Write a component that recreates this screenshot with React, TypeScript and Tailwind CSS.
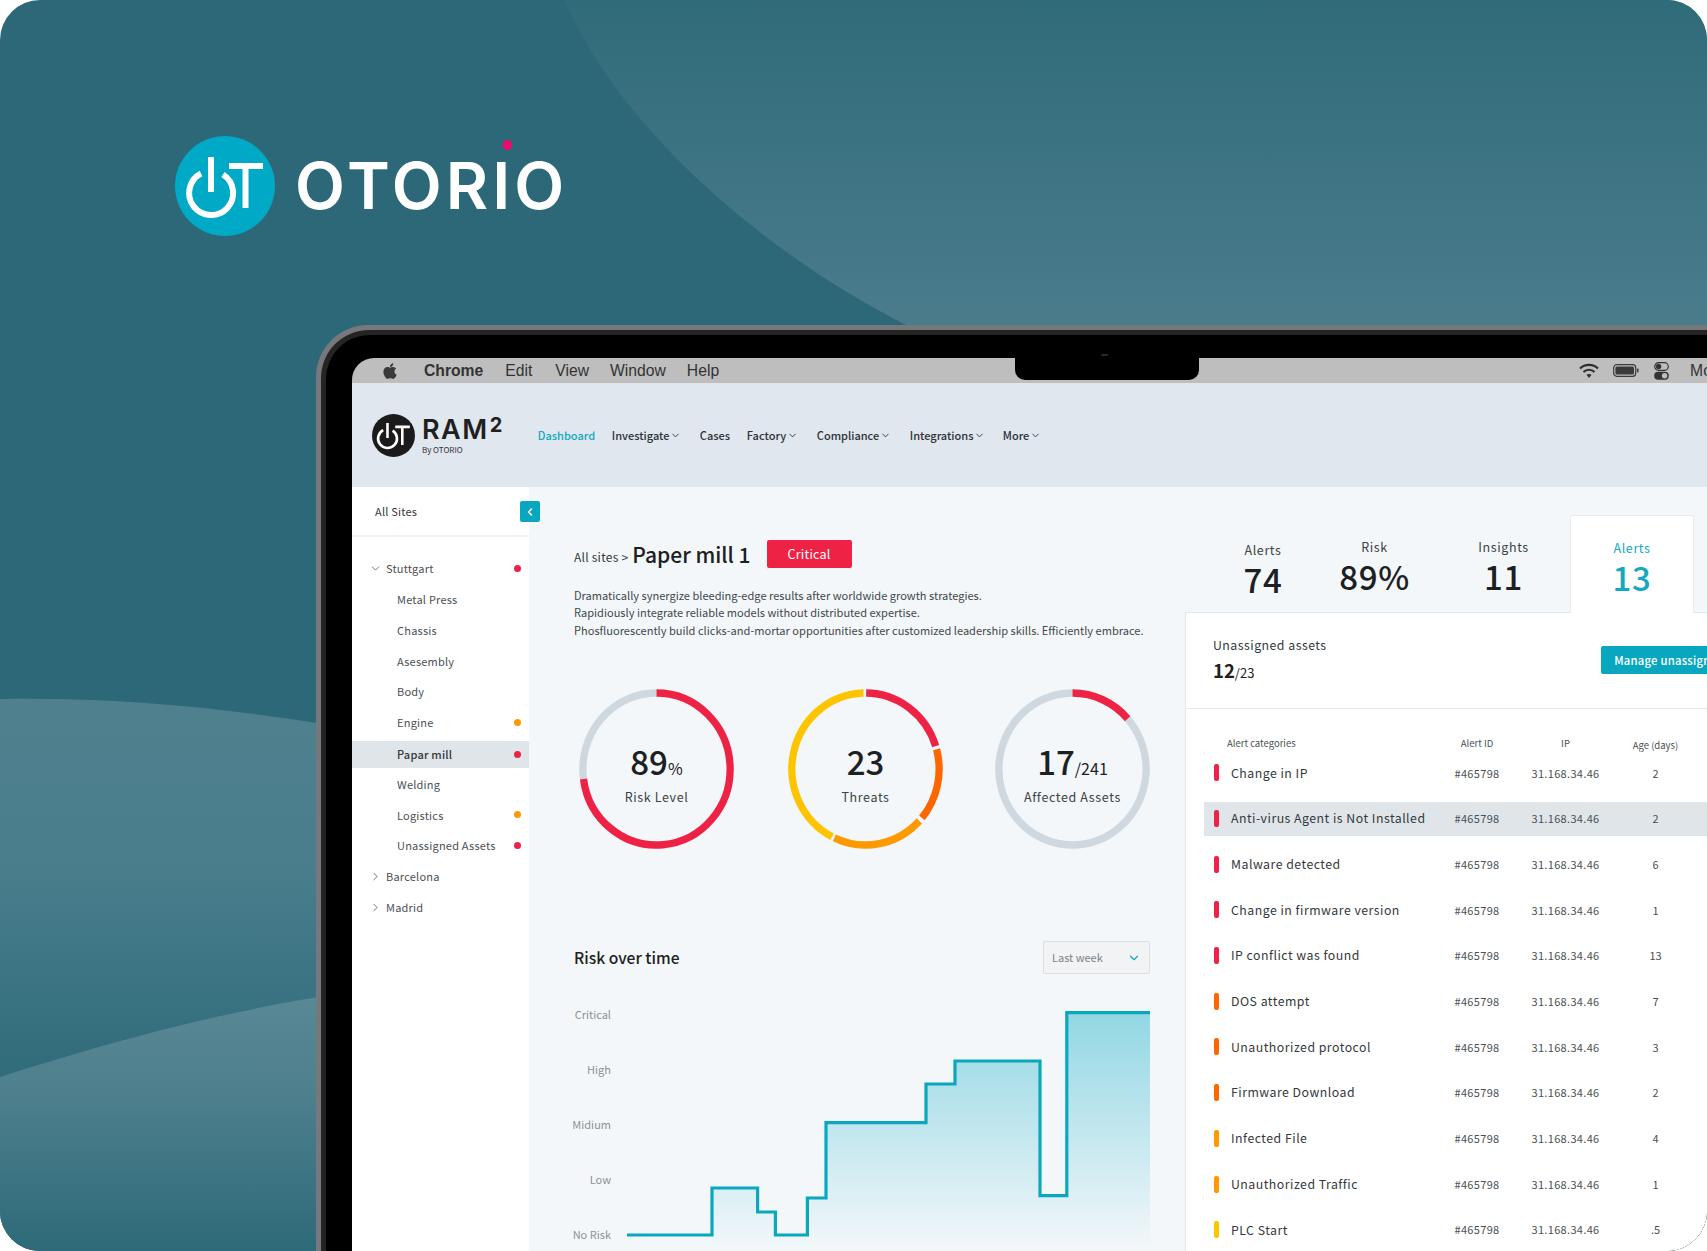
import React from "react";
import { ChevronDown, ChevronRight, ChevronLeft } from "lucide-react";
import { FaApple } from "react-icons/fa";

const sans = "font-['Noto_Sans_CJK_JP','Noto_Sans',sans-serif]";

function Mark({ size, bg, fg }: { size: number; bg: string; fg: string }) {
  return (
    <svg width={size} height={size} viewBox="0 0 100 100">
      <circle cx="50" cy="50" r="50" fill={bg} />
      <g fill="none" stroke={fg} strokeWidth="6">
        <path d="M26 37.5 A 22 22 0 1 0 48 38.5" />
        <path d="M36 21 V56" />
        <path d="M54 30 H88 M70.5 30 V72" />
      </g>
    </svg>
  );
}

function Ring({ segs, children }: { segs: [number, number, string][]; children: React.ReactNode }) {
  const r = 76;
  const pt = (a: number) => {
    const t = (a * Math.PI) / 180;
    return `${80 + r * Math.sin(t)} ${80 - r * Math.cos(t)}`;
  };
  return (
    <div className="relative w-[155px] h-[160px] shrink-0">
      <svg width="155" height="160" viewBox="0 0 160 160" preserveAspectRatio="none" className="block">
        {segs.map(([a, b, c], i) => (
          <path key={i} d={`M${pt(a)} A${r} ${r} 0 ${b - a > 180 ? 1 : 0} 1 ${pt(b)}`} fill="none" stroke={c} strokeWidth="7.5" />
        ))}
      </svg>
      <div className="absolute inset-0 flex flex-col items-center pt-[52px]">{children}</div>
    </div>
  );
}

function RingLabel({ children }: { children: React.ReactNode }) {
  return <div className="h-[20px] mt-[6px] text-[12.5px] leading-[20px] text-[#3c4246] tracking-[0.05em]">{children}</div>;
}

const sites: [string, string | null, number][] = [
  ["Stuttgart", "#ee2244", 0],
  ["Metal Press", null, 1],
  ["Chassis", null, 1],
  ["Asesembly", null, 1],
  ["Body", null, 1],
  ["Engine", "#ff9900", 1],
  ["Papar mill", "#ee2244", 1],
  ["Welding", null, 1],
  ["Logistics", "#ff9900", 1],
  ["Unassigned Assets", "#ee2244", 1],
  ["Barcelona", null, 0],
  ["Madrid", null, 0],
];

const alerts: [string, string, string][] = [
  ["Change in IP", "#ee2244", "2"],
  ["Anti-virus Agent is Not Installed", "#ee2244", "2"],
  ["Malware detected", "#ee2244", "6"],
  ["Change in firmware version", "#ee2244", "1"],
  ["IP conflict was found", "#ee2244", "13"],
  ["DOS attempt", "#ff6600", "7"],
  ["Unauthorized protocol", "#ff6600", "3"],
  ["Firmware Download", "#ff6600", "2"],
  ["Infected File", "#ff9900", "4"],
  ["Unauthorized Traffic", "#ff9900", "1"],
  ["PLC Start", "#ffc400", ".5"],
];

const nav: [string, boolean, string][] = [
  ["Investigate", true, "w-[88px]"],
  ["Cases", false, "w-[47px]"],
  ["Factory", true, "w-[70px]"],
  ["Compliance", true, "w-[93px]"],
  ["Integrations", true, "w-[93px]"],
  ["More", true, "w-[40px]"],
];

function Tab({ label, value, active, className }: { label: string; value: string; active?: boolean; className: string }) {
  return (
    <div className={`flex flex-col items-center ${className}`}>
      <div className={`h-[20px] text-[12.5px] leading-[20px] tracking-[0.05em] ${active ? "text-[#12a9c1]" : "text-[#3c4246]"}`}>{label}</div>
      <div className={`h-[38px] text-[33px] leading-[38px] font-medium tracking-[0.02em] ${active ? "text-[#12a9c1]" : "text-[#1c2023]"}`}>{value}</div>
    </div>
  );
}

export default function App() {
  return (
    <div className="relative w-[1707px] h-[1251px] overflow-hidden rounded-[40px] bg-[#2c6877]">
      <svg width="1707" height="1251" viewBox="0 0 1707 1251" className="absolute inset-0">
        <defs>
          <linearGradient id="tr" x1="0" y1="0" x2="0" y2="325" gradientUnits="userSpaceOnUse">
            <stop offset="0" stopColor="#306b7a" />
            <stop offset="1" stopColor="#4a7c8c" />
          </linearGradient>
          <linearGradient id="bl1" x1="0" y1="700" x2="0" y2="1060" gradientUnits="userSpaceOnUse">
            <stop offset="0" stopColor="#4f808e" />
            <stop offset="0.45" stopColor="#4a7e8d" />
            <stop offset="1" stopColor="#326d7c" />
          </linearGradient>
          <linearGradient id="bl2" x1="0" y1="1000" x2="0" y2="1251" gradientUnits="userSpaceOnUse">
            <stop offset="0" stopColor="#588795" />
            <stop offset="0.35" stopColor="#4f808e" />
            <stop offset="1" stopColor="#2e6a79" />
          </linearGradient>
        </defs>
        <path d="M565 0 C 610 110, 740 240, 906 325 L1707 325 L1707 0 Z" fill="url(#tr)" />
        <path d="M0 699 C 110 697, 220 707, 330 725 L330 1251 L0 1251 Z" fill="url(#bl1)" />
        <path d="M0 1077 C 100 1045, 210 1014, 330 995 L330 1251 L0 1251 Z" fill="url(#bl2)" />
      </svg>

      {/* Brand */}
      <div className="relative flex items-center pl-[175px] pt-[135px] h-[236px]">
        <Mark size={100} bg="#00a9c6" fg="#ffffff" />
        <div className="relative ml-[20px] font-['Inter',sans-serif] font-semibold text-white text-[65px] leading-[65px] tracking-[4px]">
          OTORIO
          <span className="absolute left-[208px] top-[-13px] w-[9px] h-[10px] rounded-full bg-[#ee0a6c]" />
        </div>
      </div>

      {/* Laptop */}
      <div className="relative ml-[316px] mt-[89px] w-[1500px] h-[1000px] rounded-tl-[52px] bg-[#76787b] pl-[5px] pt-[5px]">
        <div className="h-full rounded-tl-[48px] bg-[#242424] pl-[5px] pt-[5px]">
          <div className="h-full rounded-tl-[44px] bg-black pl-[26px] pt-[23px]">
            <span className="absolute left-[785px] top-[29px] w-[7px] h-[2px] rounded-full bg-[#2a2a2a]" />
            <div className="h-full w-full overflow-hidden rounded-tl-[22px] flex flex-col">
              {/* Menu bar */}
              <div className="relative h-[25px] shrink-0 bg-[#bebebe] flex items-center font-['Liberation_Sans',sans-serif] text-[15.7px] text-[#333]">
                <FaApple className="ml-[29px] text-[#3a3a3a]" size={18} />
                <span className="ml-[25px] font-bold">Chrome</span>
                <span className="ml-[22px]">Edit</span>
                <span className="ml-[23px]">View</span>
                <span className="ml-[21px]">Window</span>
                <span className="ml-[21px]">Help</span>
                <div className="ml-[296px] mb-[3px] w-[184px] h-[22px] self-start rounded-b-[10px] bg-black" />
                <svg width="20" height="16" viewBox="0 0 20 16" className="ml-[380px]">
                  <g fill="none" stroke="#2e2e2e" strokeWidth="2.2">
                    <path d="M1 5.5 C 6 0.7, 14 0.7, 19 5.5" />
                    <path d="M4.5 9 C 7.5 6, 12.5 6, 15.5 9" />
                  </g>
                  <path d="M7.5 11.8 C 9 10.6, 11 10.6, 12.5 11.8 L10 15 Z" fill="#2e2e2e" />
                </svg>
                <svg width="26" height="13" viewBox="0 0 26 13" className="ml-[14px]">
                  <rect x="0.7" y="0.7" width="22" height="11.6" rx="3" fill="none" stroke="#3a3a3a" strokeWidth="1.2" />
                  <rect x="2.4" y="2.4" width="18.6" height="8.2" rx="1.5" fill="#3a3a3a" />
                  <rect x="24" y="4.5" width="1.5" height="4" rx="0.7" fill="#3a3a3a" />
                </svg>
                <svg width="15" height="18" viewBox="0 0 15 18" className="ml-[15px]">
                  <rect x="0.7" y="0.7" width="13.6" height="7.6" rx="3.8" fill="none" stroke="#333" strokeWidth="1.2" />
                  <circle cx="4.6" cy="4.5" r="2.7" fill="#333" />
                  <rect x="0.2" y="9.8" width="14.6" height="8" rx="4" fill="#333" />
                  <circle cx="10.6" cy="13.8" r="2.7" fill="#bebebe" />
                </svg>
                <span className="ml-[21px]">Mon</span>
              </div>

              {/* App nav */}
              <div className={`h-[104px] shrink-0 bg-[#e0e7ef] flex items-center ${sans}`}>
                <div className="ml-[20px] flex items-center">
                  <Mark size={43} bg="#1b1b1b" fg="#ffffff" />
                  <div className="ml-[7px] flex flex-col">
                    <div className="font-['Inter',sans-serif] font-semibold text-[27px] leading-[27px] text-[#1f1f1f] tracking-[1.5px]">
                      RAM<sup className="text-[20px] font-bold leading-none top-[-7px] ml-[1px] align-baseline relative">2</sup>
                    </div>
                    <div className="text-[8px] leading-[10px] text-[#333] mt-[2px]">By OTORIO</div>
                  </div>
                </div>
                <div className="ml-[34px] flex items-center text-[11px] font-medium text-[#2d3236]">
                  <span className="w-[74px] text-[#12a9c1]">Dashboard</span>
                  {nav.map(([t, c, w]) => (
                    <span key={t} className={`flex items-center ${w}`}>
                      {t}
                      {c && <ChevronDown size={11} strokeWidth={2} className="ml-[1px]" />}
                    </span>
                  ))}
                </div>
              </div>

              {/* Body */}
              <div className={`flex flex-1 min-h-0 bg-[#f3f7fa] ${sans}`}>
                {/* Sidebar */}
                <div className="relative w-[177px] shrink-0 bg-white text-[11px] text-[#4a5054] tracking-[0.02em]">
                  <div className="h-[50px] border-b-2 border-[#f0f3f6] flex items-center pl-[23px] text-[#33383b]">All Sites</div>
                  <button className="absolute left-[168px] top-[14px] w-[20px] h-[21px] rounded-[2px] bg-[#08a7bf] flex items-center justify-center">
                    <ChevronLeft size={12} strokeWidth={3} className="text-white" />
                  </button>
                  <div className="pt-[16px]">
                    {sites.map(([name, dot, lvl]) => {
                      const on = name === "Papar mill";
                      return (
                        <div key={name} className={`flex items-center ${on ? "h-[27px] mt-[3px] mb-[0.8px] bg-[#e0e5ea] font-medium text-[#33383b]" : "h-[30.8px]"}`}>
                          {lvl === 0 ? (
                            name === "Stuttgart" ? (
                              <ChevronDown size={13} strokeWidth={1.5} className="ml-[17px] mr-[4px] text-[#555]" />
                            ) : (
                              <ChevronRight size={13} strokeWidth={1.5} className="ml-[17px] mr-[4px] text-[#555]" />
                            )
                          ) : (
                            <span className="w-[45px]" />
                          )}
                          <span className="flex-1">{name}</span>
                          {dot && <span className="w-[7px] h-[7px] rounded-full mr-[8px]" style={{ background: dot }} />}
                        </div>
                      );
                    })}
                  </div>
                </div>

                {/* Main column */}
                <div className="w-[656px] shrink-0 pl-[45px] pt-[53px]">
                  <div className="flex items-center h-[28px]">
                    <span className="text-[12px] text-[#33383b] mt-[5px] tracking-[0.02em]">All sites &gt;</span>
                    <span className="ml-[4px] text-[21px] leading-[28px] font-medium text-[#1c2023]">Paper mill 1</span>
                    <span className="ml-[16px] w-[85px] h-[28px] rounded-[2px] bg-[#ee2244] text-white text-[12.5px] flex items-center justify-center tracking-[0.02em]">Critical</span>
                  </div>
                  <div className="mt-[19px] text-[11.05px] leading-[17.4px] text-[#42484c] whitespace-nowrap">
                    <div>Dramatically synergize bleeding-edge results after worldwide growth strategies.</div>
                    <div>Rapidiously integrate reliable models without distributed expertise.</div>
                    <div>Phosfluorescently build clicks-and-mortar opportunities after customized leadership skills. Efficiently embrace.</div>
                  </div>

                  <div className="mt-[50px] ml-[5px] flex">
                    <Ring segs={[[262.5, 360, "#ced8de"], [0, 262.5, "#ee2244"]]}>
                      <div className="h-[40px] text-[33px] leading-[40px] font-medium text-[#1c2023]">
                        89<span className="text-[16px] font-normal">%</span>
                      </div>
                      <RingLabel>Risk Level</RingLabel>
                    </Ring>
                    <div className="w-[54px]" />
                    <Ring segs={[[0.5, 72.5, "#ee2244"], [75, 130, "#ff6600"], [133, 205, "#ff9900"], [207, 358.5, "#ffc400"]]}>
                      <div className="h-[40px] text-[33px] leading-[40px] font-medium text-[#1c2023]">23</div>
                      <RingLabel>Threats</RingLabel>
                    </Ring>
                    <div className="w-[52px]" />
                    <Ring segs={[[48.5, 360, "#ced8de"], [0, 48.5, "#ee2244"]]}>
                      <div className="h-[40px] text-[33px] leading-[40px] font-medium text-[#1c2023]">
                        17<span className="text-[16px] font-normal">/241</span>
                      </div>
                      <RingLabel>Affected Assets</RingLabel>
                    </Ring>
                  </div>

                  <div className="mt-[92px] flex items-center justify-between w-[576px] h-[33px]">
                    <div className="text-[15.6px] font-medium text-[#1c2023]">Risk over time</div>
                    <div className="w-[107px] h-[33px] rounded-[2px] border border-[#dcdfe2] bg-[#f1f3f5] flex items-center justify-between pl-[8px] pr-[8px] text-[11px] text-[#7b8287]">
                      Last week
                      <ChevronDown size={14} strokeWidth={2} className="text-[#12a9c1]" />
                    </div>
                  </div>

                  <div className="mt-[30px] flex">
                    <div className="w-[37px] h-[240px] flex flex-col justify-between items-end text-[11px] leading-[20px] text-[#8a9296] whitespace-nowrap">
                      <span>Critical</span>
                      <span>High</span>
                      <span>Midium</span>
                      <span>Low</span>
                      <span>No Risk</span>
                    </div>
                    <svg width="532" height="246" viewBox="0 0 532 246" className="ml-[9px] shrink-0">
                      <defs>
                        <linearGradient id="area" x1="0" y1="8" x2="0" y2="246" gradientUnits="userSpaceOnUse">
                          <stop offset="0" stopColor="#92d7e3" />
                          <stop offset="1" stopColor="#92d7e3" stopOpacity="0" />
                        </linearGradient>
                      </defs>
                      <path
                        d="M92 246V184H137.6V208H155.4V231H187.4V194H206V118.7H306V80H335V57H420V191.7H446.8V8.7H530V246Z"
                        fill="url(#area)"
                      />
                      <path
                        d="M7 231H92V184H137.6V208H155.4V231H187.4V194H206V118.7H306V80H335V57H420V191.7H446.8V8.7H530"
                        fill="none"
                        stroke="#0aa8bf"
                        strokeWidth="3.2"
                      />
                    </svg>
                  </div>
                </div>

                {/* Right column */}
                <div className="w-[600px] shrink-0 pt-[28px] text-[#33383b]">
                  <div className="flex h-[97px] items-stretch">
                    <Tab label="Alerts" value="74" className="ml-[18px] w-[120px] pt-[25px]" />
                    <Tab label="Risk" value="89%" className="w-[103px] pt-[22px]" />
                    <Tab label="Insights" value="11" className="ml-[11px] w-[133px] pt-[22px]" />
                    <div className="w-[124px] bg-white rounded-t-[3px] border-x border-t border-[#e8ecef] relative z-10 -mb-px">
                      <Tab label="Alerts" value="13" active className="pt-[22px]" />
                    </div>
                  </div>
                  <div className="bg-white border-l border-t border-[#e4e8ec] h-[700px]">
                    <div className="h-[96px] border-b border-[#e4e8ec] flex pl-[27px] pt-[22px]">
                      <div className="w-[425px] whitespace-nowrap">
                        <div className="text-[12.3px] leading-[20px] tracking-[0.04em]">Unassigned assets</div>
                        <div className="mt-[2px] h-[26px] text-[18.5px] leading-[26px] font-semibold text-[#1c2023]">
                          12<span className="text-[13px] font-normal">/23</span>
                        </div>
                      </div>
                      <div className="mt-[11px] w-[200px] h-[28px] rounded-[2px] bg-[#08a7bf] text-white font-medium text-[11.3px] leading-[28px] pl-[13px] whitespace-nowrap tracking-[0.02em]">
                        Manage unassigned assets
                      </div>
                    </div>
                    <div className="flex h-[14px] mt-[27px] ml-[18px] text-[9.5px] leading-[14px] text-[#4a5054] whitespace-nowrap">
                      <span className="w-[223px] pl-[23px]">Alert categories</span>
                      <span className="w-[100px] text-center">Alert ID</span>
                      <span className="w-[77px] text-center">IP</span>
                      <span className="w-[103px] text-center pt-[2px]">Age (days)</span>
                    </div>
                    {alerts.map(([name, c, age]) => (
                      <div
                        key={name}
                        className={`flex items-center ml-[18px] pl-[10px] ${name.startsWith("Anti") ? "h-[34px] my-[5.85px] bg-[#e0e5ea]" : "h-[45.7px]"}`}
                      >
                        <span className="w-[5px] h-[17px] rounded-[2px] shrink-0" style={{ background: c }} />
                        <span className="w-[208px] pl-[12px] text-[12.3px] tracking-[0.04em] text-[#33383b] whitespace-nowrap">{name}</span>
                        <span className="w-[100px] text-center text-[11px] tracking-[0.03em] text-[#4a5054]">#465798</span>
                        <span className="w-[77px] text-center text-[11px] tracking-[0.03em] text-[#4a5054] whitespace-nowrap">31.168.34.46</span>
                        <span className="w-[103px] text-center text-[11px] text-[#4a5054]">{age}</span>
                      </div>
                    ))}
                  </div>
                </div>
              </div>
            </div>
          </div>
        </div>
      </div>
    </div>
  );
}
